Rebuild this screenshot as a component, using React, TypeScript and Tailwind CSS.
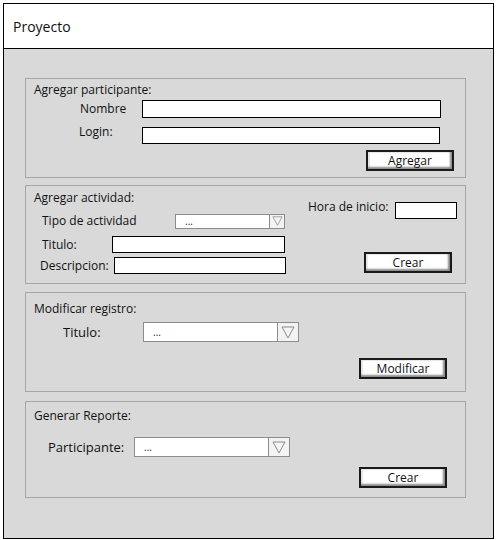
import React from "react";

const font = { fontFamily: '"Open Sans", "Noto Sans", sans-serif' };

function Button({ label, w }: { label: string; w: string }) {
  return (
    <div
      className={`${w} h-[21px] border-2 border-[#1a1a1a] bg-white shadow-[inset_-2px_-2px_2px_#8a8a8a,inset_2px_1px_1px_#e6e6e6] flex items-center justify-center text-[12px] leading-none text-[#111]`}
    >
      {label}
    </div>
  );
}

function Triangle({ size }: { size: number }) {
  return (
    <svg width={size} height={size - 1} viewBox="0 0 14 13">
      <polygon points="1,1 13,1 7,12" fill="none" stroke="#8a8a8a" strokeWidth="1" />
    </svg>
  );
}

function Select({ w, h, cell, tri }: { w: string; h: string; cell: string; tri: number }) {
  return (
    <div className={`flex ${w} ${h} border border-[#8c8c8c] bg-white`}>
      <div className="flex-1 pl-[9px] text-[10px] leading-none flex items-center text-[#222]">...</div>
      <div className={`${cell} h-full border-l border-[#8c8c8c] bg-[#f3f3f3] flex items-center justify-center`}>
        <Triangle size={tri} />
      </div>
    </div>
  );
}

export default function App() {
  return (
    <div className="w-[498px] h-[540px] bg-white pt-[3px] pl-[3px] text-[12px] text-[#111]" style={font}>
      <div className="w-[491px] h-[536px] border border-black flex flex-col">
        <div className="h-[45px] bg-white border-b border-black flex items-center pl-[9px] text-[14px]">
          Proyecto
        </div>
        <div className="flex-1 bg-[#d9d9d9] pl-[21px] pt-[29px] flex flex-col">
          {/* Section 1 */}
          <div className="w-[441px] h-[100px] border border-[#a6a6a6] flex flex-col">
            <div className="mt-[3px] pl-[8px] leading-[16px]">Agregar participante:</div>
            <div className="mt-[2px] flex items-center">
              <div className="ml-[54px] w-[62px] leading-[16px]">Nombre</div>
              <div className="w-[299px] h-[18px] border border-black bg-white" />
            </div>
            <div className="mt-[9px] flex items-center">
              <div className="ml-[53px] w-[63px] leading-[16px] -mt-[8px]">Login:</div>
              <div className="w-[298px] h-[17px] border border-black bg-white" />
            </div>
            <div className="mt-[6px] flex justify-end pr-[11px]">
              <Button label="Agregar" w="w-[88px]" />
            </div>
          </div>

          {/* Section 2 */}
          <div className="mt-[7px] w-[441px] h-[99px] border border-[#a6a6a6] flex">
            <div className="w-[261px] flex flex-col">
              <div className="mt-[4px] pl-[8px] leading-[16px]">Agregar actividad:</div>
              <div className="mt-[7px] flex items-center">
                <div className="ml-[16px] w-[133px] leading-[16px]">Tipo de actividad</div>
                <Select w="w-[110px]" h="h-[15px]" cell="w-[15px]" tri={11} />
              </div>
              <div className="mt-[7px] flex items-center">
                <div className="ml-[16px] w-[70px] leading-[16px]">Titulo:</div>
                <div className="w-[173px] h-[17px] border border-black bg-white" />
              </div>
              <div className="mt-[4px] flex items-center">
                <div className="ml-[14px] w-[74px] leading-[16px]">Descripcion:</div>
                <div className="w-[172px] h-[17px] border border-black bg-white" />
              </div>
            </div>
            <div className="ml-[21px] w-[149px] flex flex-col">
              <div className="mt-[16px] flex items-center">
                <div className="w-[87px] leading-[16px] -mt-[7px]">Hora de inicio:</div>
                <div className="w-[62px] h-[17px] border border-black bg-white" />
              </div>
              <div className="mt-[33px] flex justify-end pr-[5px]">
                <Button label="Crear" w="w-[88px]" />
              </div>
            </div>
          </div>

          {/* Section 3 */}
          <div className="mt-[8px] w-[441px] h-[100px] border border-[#a6a6a6] flex flex-col">
            <div className="mt-[8px] pl-[8px] leading-[16px]">Modificar registro:</div>
            <div className="mt-[5px] flex items-center">
              <div className="ml-[37px] w-[80px] leading-[16px] text-[13px]">Titulo:</div>
              <Select w="w-[156px]" h="h-[20px]" cell="w-[21px]" tri={14} />
            </div>
            <div className="mt-[16px] flex justify-end pr-[18px]">
              <Button label="Modificar" w="w-[88px]" />
            </div>
          </div>

          {/* Section 4 */}
          <div className="mt-[9px] w-[441px] h-[97px] border border-[#a6a6a6] flex flex-col">
            <div className="mt-[6px] pl-[8px] leading-[16px]">Generar Reporte:</div>
            <div className="mt-[13px] flex items-center">
              <div className="ml-[22px] w-[86px] leading-[16px] text-[13px]">Participante:</div>
              <Select w="w-[156px]" h="h-[20px]" cell="w-[21px]" tri={14} />
            </div>
            <div className="mt-[10px] flex justify-end pr-[18px]">
              <Button label="Crear" w="w-[88px]" />
            </div>
          </div>
        </div>
      </div>
    </div>
  );
}
